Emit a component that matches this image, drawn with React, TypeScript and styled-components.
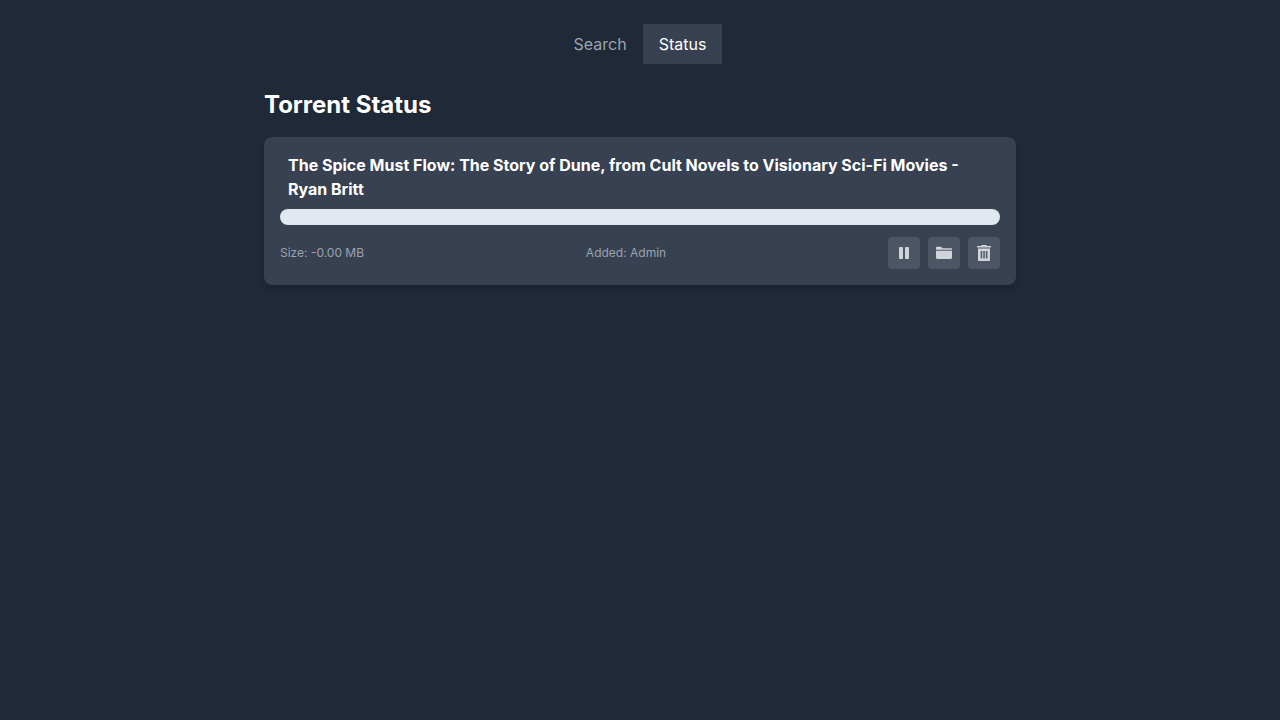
import React from 'react';
import styled, { createGlobalStyle } from 'styled-components';

const GlobalStyle = createGlobalStyle`
  html, body {
    margin: 0;
    padding: 0;
    background: #1f2937;
    font-family: Inter, "Liberation Sans", sans-serif;
  }
`;

const Page = styled.div`
  min-height: 720px;
  background: #1f2937;
  padding-top: 24px;
  box-sizing: border-box;
`;

const Tabs = styled.nav`
  display: flex;
  justify-content: center;
  margin-bottom: 25px;
`;

const Tab = styled.button<{ $active?: boolean }>`
  height: 40px;
  padding: 0 16px;
  border: none;
  font: inherit;
  font-size: 16px;
  color: ${p => (p.$active ? '#ffffff' : '#9ca3af')};
  background: ${p => (p.$active ? '#374151' : 'transparent')};
`;

const Content = styled.main`
  width: 752px;
  margin: 0 auto;
`;

const Heading = styled.h1`
  margin: 0 0 16px;
  font-size: 24px;
  line-height: 32px;
  font-weight: 700;
  color: #ffffff;
`;

const Card = styled.section`
  padding: 16px;
  border-radius: 8px;
  background: #374151;
  box-shadow: 0 4px 6px -1px rgba(0, 0, 0, 0.1), 0 2px 4px -1px rgba(0, 0, 0, 0.06);
`;

const Title = styled.h2`
  margin: 0 0 8px;
  padding: 0 8px;
  font-size: 16px;
  line-height: 24px;
  font-weight: 700;
  color: #ffffff;
`;

const Progress = styled.div`
  height: 16px;
  border-radius: 8px;
  background: #e2e8f0;
  margin-bottom: 12px;
`;

const Footer = styled.div`
  display: flex;
  align-items: center;
  justify-content: space-between;
`;

const Meta = styled.span`
  font-size: 12px;
  line-height: 16px;
  color: #9ca3af;
`;

const Actions = styled.div`
  display: flex;
  gap: 8px;
`;

const IconButton = styled.button`
  width: 32px;
  height: 32px;
  padding: 0;
  display: flex;
  align-items: center;
  justify-content: center;
  border: none;
  border-radius: 4px;
  background: #4b5563;
  color: #d1d5db;
`;

const PauseIcon = () => (
  <svg width="16" height="16" viewBox="0 0 16 16" fill="currentColor">
    <rect x="3" y="2" width="4" height="12" rx="1" />
    <rect x="9" y="2" width="4" height="12" rx="1" />
  </svg>
);

const FolderIcon = () => (
  <svg width="16" height="16" viewBox="0 0 16 16" fill="currentColor">
    <path d="M0 2.5C0 2 .4 1.7 1 1.7h4l1.6 1.6H15c.6 0 1 .4 1 1v.5H0z" />
    <path d="M0 5.7h16v7c0 .7-.5 1.2-1.2 1.2H1.2C.5 13.9 0 13.4 0 12.7z" />
  </svg>
);

const TrashIcon = () => (
  <svg width="16" height="16" viewBox="0 0 16 16" fill="currentColor">
    <path d="M5.5 0h5l.5 1h4v1.500H1V1h4z" />
    <path
      fillRule="evenodd"
      d="M2 3.500h12V15c0 .6-.4 1-1 1H3c-.6 0-1-.4-1-1zM4.700 6v7.500h1.500V6zm2.600 0v7.500h1.500V6zm2.600 0v7.500h1.500V6z"
    />
  </svg>
);

export default function App() {
  return (
    <Page>
      <GlobalStyle />
      <Tabs>
        <Tab>Search</Tab>
        <Tab $active>Status</Tab>
      </Tabs>
      <Content>
        <Heading>Torrent Status</Heading>
        <Card>
          <Title>The Spice Must Flow: The Story of Dune, from Cult Novels to Visionary Sci-Fi Movies - Ryan Britt</Title>
          <Progress />
          <Footer>
            <Meta>Size: -0.00 MB</Meta>
            <Meta>Added: Admin</Meta>
            <Actions>
              <IconButton><PauseIcon /></IconButton>
              <IconButton><FolderIcon /></IconButton>
              <IconButton><TrashIcon /></IconButton>
            </Actions>
          </Footer>
        </Card>
      </Content>
    </Page>
  );
}
